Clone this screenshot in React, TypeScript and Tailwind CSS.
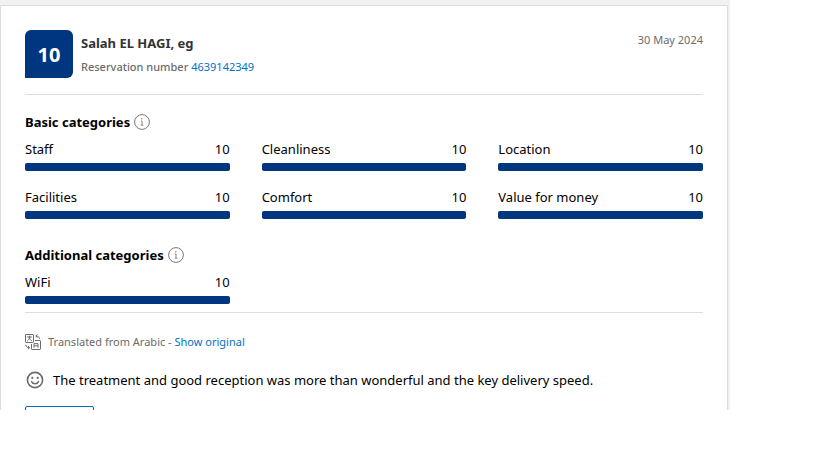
import React from 'react';

interface Score {
    label: string;
    value: number;
}

const basicScores: Score[] = [
    { label: 'Staff', value: 10 },
    { label: 'Cleanliness', value: 10 },
    { label: 'Location', value: 10 },
    { label: 'Facilities', value: 10 },
    { label: 'Comfort', value: 10 },
    { label: 'Value for money', value: 10 },
];

const additionalScores: Score[] = [{ label: 'WiFi', value: 10 }];

function InfoIcon() {
    return (
        <svg viewBox="0 0 16 16" className="w-4 h-4" fill="none" stroke="#7a7a7a" aria-hidden="true">
            <circle cx="8" cy="8" r="7.4" strokeWidth="1" />
            <path d="M7 7h1v4M6.7 11.2h2.8" strokeWidth="0.9" />
            <circle cx="7.8" cy="4.7" r="0.7" fill="#7a7a7a" stroke="none" />
        </svg>
    );
}

function TranslateIcon() {
    return (
        <svg viewBox="0 0 16 16" className="w-4 h-4 shrink-0" fill="none" stroke="#6b6b6b" strokeWidth="1" aria-hidden="true">
            <rect x="0.5" y="0.5" width="8" height="8" rx="0.6" />
            <path d="M2.2 3h4.6M4.5 1.8V3M4.5 3c0 2-1 3.2-2.3 4M4.5 3c0 2 1 3.2 2.3 4" />
            <path d="M10 6.5h4.9a.6.6 0 0 1 .6.6v7.8a.6.6 0 0 1-.6.6H7.1a.6.6 0 0 1-.6-.6V10" />
            <path d="M9 13.8V9.6h4v4.2M9 11.8h4" />
            <path d="M14.5 4.8c0-1.7-1.2-2.7-3.6-2.7M12.5.5l-1.7 1.6 1.7 1.6" />
            <path d="M.8 10.8c0 1.7 1.2 2.8 3.6 2.8M3 12l1.7 1.6L3 15.2" />
        </svg>
    );
}

function SmileIcon() {
    return (
        <svg viewBox="0 0 20 20" className="w-5 h-5 shrink-0" fill="none" stroke="#6b6b6b" strokeWidth="1.6" strokeLinecap="round" aria-hidden="true">
            <circle cx="10" cy="10" r="7.6" />
            <path d="M6.6 11.6c.6 1.4 1.9 2.2 3.4 2.2s2.8-.8 3.4-2.2" strokeWidth="1.4" />
            <circle cx="7.3" cy="7.9" r="1.1" fill="#6b6b6b" stroke="none" />
            <circle cx="12.7" cy="7.9" r="1.1" fill="#6b6b6b" stroke="none" />
        </svg>
    );
}

function ScoreGrid({ scores }: { scores: Score[] }) {
    return (
        <div className="grid grid-cols-3 gap-x-8 gap-y-4 mt-[7px]">
            {scores.map((score) => (
                <div key={score.label}>
                    <div className="flex justify-between leading-5 mb-1">
                        <span>{score.label}</span>
                        <span>{score.value}</span>
                    </div>
                    <div className="h-2 rounded-[2px] overflow-hidden bg-gray-200">
                        <div className="h-full bg-[#003580]" style={{ width: `${score.value * 10}%` }} />
                    </div>
                </div>
            ))}
        </div>
    );
}

function CategoryHeading({ title }: { title: string }) {
    return (
        <div className="flex items-center gap-1">
            <h3 className="font-bold leading-5">{title}</h3>
            <button type="button" aria-label={`About ${title.toLowerCase()}`}>
                <InfoIcon />
            </button>
        </div>
    );
}

export default function App() {
    return (
        <div className="bg-white font-['Noto_Sans',sans-serif] text-[13px] text-black">
            <main className="mr-[89px] pt-[5px] pr-[2px] bg-[#f1f1f1]">
                <article className="bg-white border border-b-0 border-[#dcdcdc] px-6 pt-6">
                    <header className="flex items-start gap-2 pb-4 border-b border-[#dedede]">
                        <div className="w-12 h-12 shrink-0 flex items-center justify-center pt-0.5 rounded-md rounded-bl-none bg-[#003580] text-white text-xl font-bold">10</div>
                        <div className="flex-1 pt-[3px]">
                            <h2 className="font-bold leading-5 text-[#333333]">Salah EL HAGI, eg</h2>
                            <p className="mt-1 text-[11px] leading-5 text-[#6b6b6b]">
                                <span className="font-medium">Reservation number</span> <a href="#reservation" className="text-[#0071c2]">4639142349</a>
                            </p>
                        </div>
                        <time dateTime="2024-05-30" className="text-[11px] leading-5 text-[#6b6b6b]">30 May 2024</time>
                    </header>

                    <section className="pt-[17px]">
                        <CategoryHeading title="Basic categories" />
                        <ScoreGrid scores={basicScores} />
                    </section>

                    <section className="pt-[26px] pb-2 border-b border-[#dedede]">
                        <CategoryHeading title="Additional categories" />
                        <ScoreGrid scores={additionalScores} />
                    </section>

                    <div className="flex items-center gap-[7px] pt-[19px] text-[11px] leading-5 text-[#6b6b6b]">
                        <TranslateIcon />
                        <p>
                            Translated from Arabic - <a href="#original" className="text-[#0071c2]">Show original</a>
                        </p>
                    </div>

                    <div className="flex items-center gap-2 mt-[18px]">
                        <SmileIcon />
                        <p className="leading-5">The treatment and good reception was more than wonderful and the key delivery speed.</p>
                    </div>

                    {/* only the top edge of the reply button peeks out */}
                    <div className="h-1 mt-4 overflow-hidden">
                        <button type="button" aria-label="Reply" className="block w-[69px] h-9 border border-[#0071c2] rounded-[2px]" />
                    </div>
                </article>
            </main>
        </div>
    );
}
